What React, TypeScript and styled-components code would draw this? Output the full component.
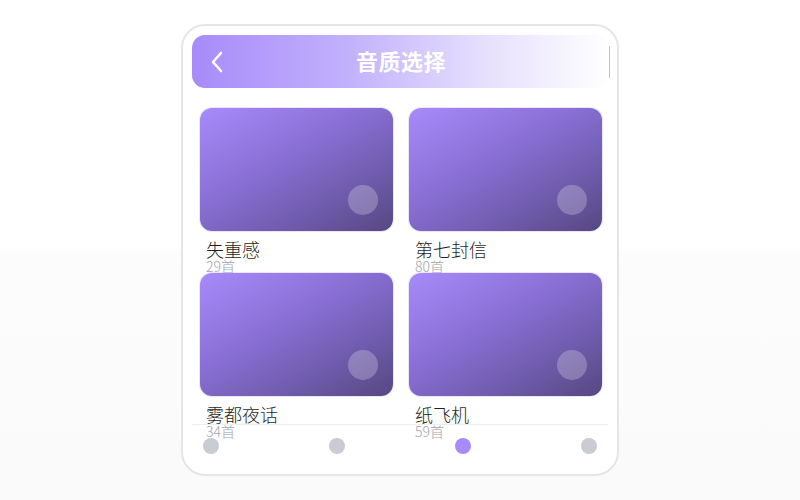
import styled, { createGlobalStyle } from "styled-components";

const GlobalStyle = createGlobalStyle`
  html, body {
    margin: 0;
    padding: 0;
  }
  body {
    min-height: 500px;
    background: linear-gradient(to bottom, #ffffff 0%, #ffffff 49%, #fcfcfd 51%, #fafafb 100%);
    font-family: "Noto Sans CJK SC", "Noto Sans", sans-serif;
  }
`;

const Page = styled.div`
  display: flex;
  justify-content: center;
  padding-top: 24px;
`;

const Phone = styled.div`
  box-sizing: border-box;
  width: 438px;
  height: 452px;
  border: 2px solid #e6e6ea;
  border-radius: 24px;
  background: #ffffff;
  padding: 9px 7px 0 9px;
  display: flex;
  flex-direction: column;
  overflow: hidden;
`;

const Header = styled.div`
  box-sizing: border-box;
  height: 53px;
  flex-shrink: 0;
  border-radius: 13px;
  background: linear-gradient(90deg, #a78bfa 0%, #c2b2fc 38%, #e4ddfd 68%, #ffffff 100%);
  display: grid;
  grid-template-columns: 48px 1fr 48px;
  align-items: center;
`;

const BackButton = styled.button`
  border: none;
  background: transparent;
  padding: 0 0 0 18px;
  display: flex;
  align-items: center;
  cursor: pointer;
`;

const Title = styled.h1`
  margin: 0 0 3px;
  text-align: center;
  color: #ffffff;
  font-size: 22px;
  line-height: 26px;
  font-weight: 700;
  letter-spacing: 0.5px;
`;

const EdgeLine = styled.div`
  justify-self: end;
  width: 1px;
  height: 32px;
  background: #c4b5fd;
`;

const Content = styled.div`
  height: 316px;
  flex-shrink: 0;
  margin-top: 20px;
  padding: 0 8px;
`;

const Grid = styled.div`
  display: grid;
  grid-template-columns: 193px 193px;
  column-gap: 16px;
`;

const Album = styled.div`
  display: flex;
  flex-direction: column;
`;

const Cover = styled.div`
  height: 123px;
  border-radius: 12px;
  background: linear-gradient(150deg, #a78bfa 0%, #8a70d6 40%, #6c5aa8 75%, #574780 100%);
  box-shadow: 0 0 0 1px rgba(196, 181, 253, 0.35);
  display: flex;
  align-items: flex-end;
  justify-content: flex-end;
  padding: 0 15px 16px 0;
  box-sizing: border-box;
`;

const PlayDot = styled.div`
  width: 30px;
  height: 30px;
  border-radius: 50%;
  background: rgba(255, 255, 255, 0.24);
`;

const Label = styled.div`
  height: 42px;
  padding: 8px 0 0 6px;
  box-sizing: border-box;
`;

const Name = styled.div`
  font-size: 18px;
  line-height: 20px;
  font-weight: 300;
  color: #1f1f24;
`;

const Count = styled.div`
  font-size: 14px;
  line-height: 14px;
  font-weight: 300;
  color: #a2a5ac;
`;

const Nav = styled.div`
  margin-right: 2px;
  border-top: 1px solid #eceef2;
  padding: 13px 11px 0;
  display: flex;
  justify-content: space-between;
`;

const NavDot = styled.div<{ $active?: boolean }>`
  width: 16px;
  height: 16px;
  border-radius: 50%;
  background: ${(p) => (p.$active ? "#a78bfa" : "#c9ccd3")};
`;

const albums = [
  { name: "失重感", count: 29 },
  { name: "第七封信", count: 80 },
  { name: "雾都夜话", count: 34 },
  { name: "纸飞机", count: 59 },
];

const App = () => {
  return (
    <>
      <GlobalStyle />
      <Page>
        <Phone>
          <Header>
            <BackButton aria-label="返回">
              <svg width="14" height="22" viewBox="0 0 14 22" fill="none">
                <polyline
                  points="11,2 3,11 11,20"
                  stroke="#ffffff"
                  strokeWidth="2.6"
                  strokeLinecap="round"
                  strokeLinejoin="round"
                />
              </svg>
            </BackButton>
            <Title>音质选择</Title>
            <EdgeLine />
          </Header>
          <Content>
            <Grid>
              {albums.map((a) => (
                <Album key={a.name}>
                  <Cover>
                    <PlayDot />
                  </Cover>
                  <Label>
                    <Name>{a.name}</Name>
                    <Count>{a.count}首</Count>
                  </Label>
                </Album>
              ))}
            </Grid>
          </Content>
          <Nav>
            <NavDot />
            <NavDot />
            <NavDot $active />
            <NavDot />
          </Nav>
        </Phone>
      </Page>
    </>
  );
};

export default App;
